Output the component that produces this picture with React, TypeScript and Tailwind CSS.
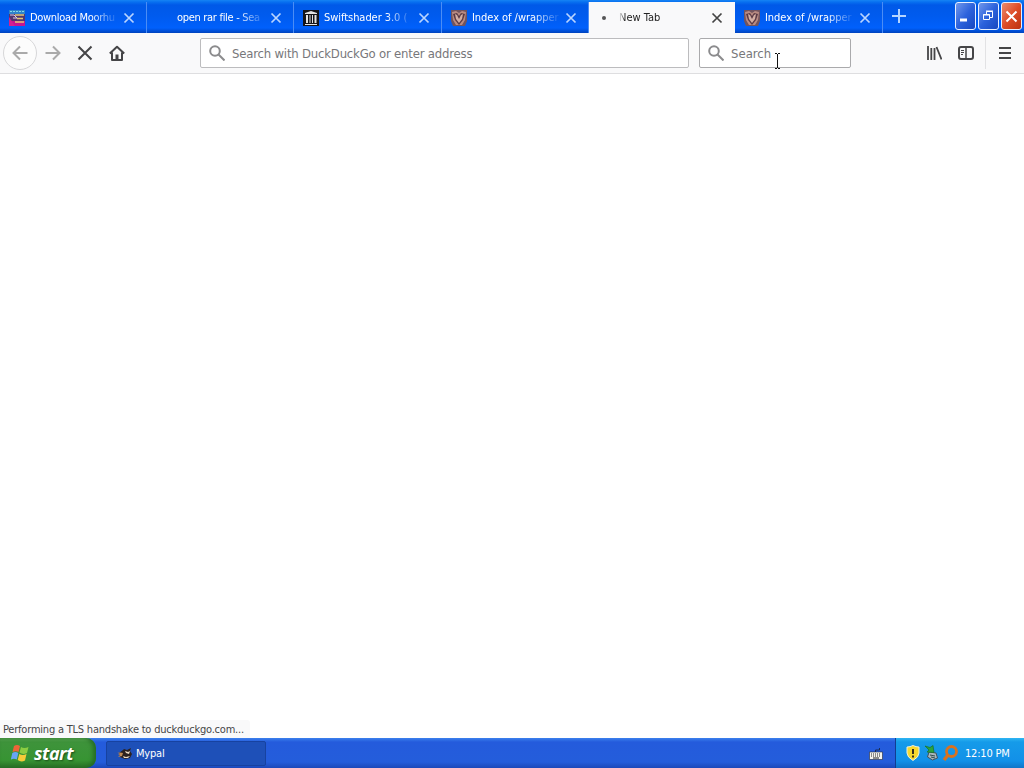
import type { ReactNode } from "react";

type Site = "moor" | "none" | "archive" | "owl" | "loading";

const TABS: { title: string; site: Site; width: string; text: string; active?: boolean }[] = [
  { title: "Download Moorhu",   site: "moor",    width: "w-[147px]", text: "tracking-[-0.32px]" },
  { title: "open rar file - Sea", site: "none",    width: "w-[147px]", text: "tracking-[-0.3px]" },
  { title: "Swiftshader 3.0 (", site: "archive", width: "w-[148px]", text: "tracking-[-0.05px]" },
  { title: "Index of /wrapper", site: "owl",     width: "w-[147px]", text: "tracking-[-0.05px]" },
  { title: "New Tab",           site: "loading", width: "w-[146px]", text: "tracking-[0px]", active: true },
  { title: "Index of /wrapper", site: "owl",     width: "w-[148px]", text: "tracking-[-0.05px]" },
];

function Favicon({ site }: { site: Site }) {
  if (site === "none") return <span className="w-4 shrink-0" />;
  if (site === "loading")
    return (
      <span className="flex w-4 shrink-0 justify-center pr-1">
        <span className="size-1 rounded-full bg-[#555]" />
      </span>
    );
  if (site === "moor")
    return (
      <svg className="size-4 shrink-0" viewBox="0 0 16 16">
        <path fill="#2f83c9" d="M0 0h16v5H0z" />
        <path fill="#54366d" d="M0 4h16v7H0z" />
        <path fill="#c51492" d="M0 11h16v5H0z" />
        <path fill="#d51f8f" d="M0 7l6 9H0z" />
        <path stroke="#85d9e8" d="M1 1.500h14" strokeDasharray="2 1" />
        <path stroke="#e1c875" strokeWidth="1.500" d="M6 5h9M8 8.500h6M6 12h9" />
        <path stroke="#d9cbe8" d="M1 5h4l3 3H4" fill="none" />
      </svg>
    );
  if (site === "archive")
    return (
      <svg className="size-4 shrink-0" viewBox="0 0 16 16">
        <path fill="#151519" d="M0 0h16v16H0z" />
        <path fill="#e4e4e4" d="M8 1l6 2v1H2V3zM3 5h2v8H3zm3.500 0h1v8h-1zM9 5h1v8H9zm2.500 0h2v8h-2zM2 14h12v1H2z" />
      </svg>
    );
  return (
    <svg className="size-4 shrink-0" viewBox="0 0 16 16">
      <path fill="#71545e" d="M0 0h16v11l-2 5H2l-2-5z" />
      <path fill="#b98b82" d="M1 2l4-1 3 2 3-2 4 1-1 8-3 5H5l-3-5z" />
      <path fill="#5b3a44" d="M2 4l4-1 2 3 2-3 4 1-2 6-4 5-4-5z" />
      <path fill="#d3aea3" d="M4 4l2 1 2 4 2-4 2-1-1 5-3 4-3-4z" />
    </svg>
  );
}

function CloseIcon({ className }: { className: string }) {
  return (
    <svg className={className} viewBox="0 0 12 12" fill="none" stroke="currentColor" strokeWidth="1.700">
      <path d="M1.500 1.500l9 9M10.500 1.500l-9 9" />
    </svg>
  );
}

function Tab({ title, site, width, text, active }: (typeof TABS)[number]) {
  return (
    <div
      className={`${width} flex shrink-0 items-center border-r pl-[9px] pr-[11px] ${
        active ? "border-[#f9f9fa] bg-[#f9f9fa] pr-[10px] text-[#222]" : "border-[#4b8df5] text-white"
      }`}
    >
      <Favicon site={site} />
      <span
        className={`ml-[5px] min-w-0 flex-1 overflow-hidden whitespace-nowrap text-[11px] leading-4 ${text} ${
          active
            ? "[mask-image:linear-gradient(to_right,transparent,#000_6px)]"
            : "[mask-image:linear-gradient(to_right,#000_68%,transparent)]"
        }`}
      >
        {title}
      </span>
      <CloseIcon className={`ml-1 size-3 shrink-0 ${active ? "text-[#444]" : "text-[#b9d5ff]"}`} />
    </div>
  );
}

function CaptionButton({ close, children }: { close?: boolean; children: ReactNode }) {
  return (
    <button
      className={`flex h-7 w-[21px] items-center justify-center rounded-[3px] border border-[#e8f0ff] ${
        close
          ? "bg-linear-to-br from-[#e98a6c] via-[#de4c26] to-[#bb3210]"
          : "bg-linear-to-br from-[#7096ea] via-[#2c62dc] to-[#1747c0]"
      }`}
    >
      <svg className="size-[19px] shrink-0" viewBox="0 0 19 19" fill="none" stroke="#fff">
        {children}
      </svg>
    </button>
  );
}

function SearchIcon() {
  return (
    <svg className="size-4 shrink-0" viewBox="0 0 16 16" fill="none" stroke="#8b8b8d" strokeWidth="2">
      <circle cx="6" cy="6" r="4.800" />
      <path d="M9.500 9.500l6 6" />
    </svg>
  );
}

export default function App() {
  return (
    <div className="flex h-[768px] w-[1024px] flex-col overflow-hidden bg-white font-['DejaVu_Sans_Condensed','DejaVu_Sans',sans-serif]">
      {/* Tab strip */}
      <header className="flex h-[33px] shrink-0 bg-[linear-gradient(to_bottom,#1684f4_0,#0870f0_2px,#0059e8_5px,#005bee_16px,#0060fc_28px,#0043bd_33px)] pt-0.5">
        {TABS.map((tab, i) => <Tab key={i} {...tab} />)}
        <svg className="ml-[9px] mt-[7px] size-[14px]" viewBox="0 0 14 14" stroke="#b5d5ff" strokeWidth="2">
          <path d="M7 0v14M0 7h14" />
        </svg>
        <div className="ml-auto flex gap-[2px] pr-0.5">
          <CaptionButton><path strokeWidth="3" d="M4 13h7" /></CaptionButton>
          <CaptionButton>
            <path d="M7.500 7V4.500h6v6H11M4.500 7.500h6v5h-6zM4 8h7M7 4h7" />
          </CaptionButton>
          <CaptionButton close><path strokeWidth="2" d="M4.500 4.500l10 10M14.500 4.500l-10 10" /></CaptionButton>
        </div>
      </header>

      {/* Navigation bar */}
      <nav className="relative flex h-[41px] shrink-0 items-center border-b border-[#dedee0] bg-[#f9f9fa] text-[#454547]">
        <div className="ml-[3px] flex size-[34px] items-center justify-center rounded-full border border-[#d7d7d9] bg-[#fcfcfc]">
          <svg className="size-4" viewBox="0 0 16 16" fill="none" stroke="#aaa" strokeWidth="2">
            <path d="M15.500 8H1.500M8 1.500L1.500 8 8 14.500" />
          </svg>
        </div>
        <svg className="ml-2 size-4" viewBox="0 0 16 16" fill="none" stroke="#aaa" strokeWidth="2">
          <path d="M.5 8h14M8 1.500L14.500 8 8 14.500" />
        </svg>
        <svg className="ml-4 size-4" viewBox="0 0 16 16" fill="none" stroke="currentColor" strokeWidth="2">
          <path d="M1.500 1.500l13 13M14.500 1.500l-13 13" />
        </svg>
        <svg className="ml-4 size-4" viewBox="0 0 16 16" fill="none" stroke="currentColor" strokeWidth="2">
          <path d="M.8 8.500L8 1.800l7.200 6.700M3 7.500V15h10V7.500" strokeLinejoin="round" />
          <path d="M8 15V9.500" strokeWidth="3" />
        </svg>
        <div className="ml-[75px] flex h-[30px] w-[489px] items-center rounded-[2px] border border-[#bcbcbe] bg-white pl-2">
          <SearchIcon />
          <span className="ml-[7px] whitespace-nowrap pt-px text-[13px] tracking-[-0.2px] text-[#77777a]">
            Search with DuckDuckGo or enter address
          </span>
        </div>
        <div className="ml-2.5 flex h-[30px] w-[152px] items-center rounded-[2px] border border-[#aaaaac] bg-white pl-2">
          <SearchIcon />
          <span className="ml-[7px] pt-px text-[13px] text-[#77777a]">Search</span>
        </div>
        <svg className="absolute left-[774px] top-5 h-4 w-2" viewBox="0 0 8 16" stroke="#111" fill="none">
          <path d="M1 .5h2M4 .5h2M3.500 1v14M1 15.500h2M4 15.500h2" />
        </svg>
        <svg className="ml-[75px] size-4" viewBox="0 0 16 16" fill="none" stroke="currentColor" strokeWidth="1.800">
          <path d="M2 1v14M5.300 3v12M8.500 3v12M10.500 2l5 12.500" />
        </svg>
        <svg className="ml-4 size-4" viewBox="0 0 16 16" fill="none" stroke="currentColor">
          <rect x="1" y="2" width="14" height="12" rx="2" strokeWidth="2" />
          <path d="M8 2v12" strokeWidth="1.500" />
          <path d="M3 5.500h3M3 7.500h3M3 9.500h2" />
        </svg>
        <div className="ml-[11px] h-8 w-px bg-[#e2e2e4]" />
        <svg className="ml-[13px] h-3 w-3" viewBox="0 0 12 12" stroke="currentColor" strokeWidth="2">
          <path d="M0 1h12M0 6h12M0 11h12" />
        </svg>
      </nav>

      {/* Page */}
      <main className="flex flex-1 items-end bg-white">
        <div className="flex h-[18px] w-[250px] items-center rounded-tr-[3px] bg-[#f9f9fa] pl-[3px] pt-0.5 text-[11px] text-[#454547]">
          <span className="whitespace-nowrap tracking-[-0.21px]">Performing a TLS handshake to duckduckgo.com...</span>
        </div>
      </main>

      {/* Taskbar */}
      <footer className="flex h-[30px] shrink-0 bg-[linear-gradient(to_bottom,#3b80ed_0,#245bdc_4px,#245ddb_24px,#1c48b9_30px)] text-white">
        <button className="flex w-24 items-center rounded-r-[10px] bg-[linear-gradient(to_bottom,#5eac56_0,#3e933b_4px,#379433_22px,#286f26_30px)] pl-[11px] shadow-[inset_-3px_0_4px_#256c25]">
          <svg className="size-[18px]" viewBox="0 0 18 18">
            <path fill="#ef6438" d="M3 2q3-2 6 0L7.500 8Q5 6.500 1.500 8z" />
            <path fill="#8bcc42" d="M10 3q3 2 7.500 0L16 9q-4 2-7.500-.5z" />
            <path fill="#68a5f4" d="M1.300 9q3-2 6 0l-1.500 6.500q-3-1.500-6 0z" />
            <path fill="#f6cb39" d="M8.300 10q3.500 2 7.200 0L14 16.500q-4 2-7.300-.5z" />
          </svg>
          <span className="ml-[5px] font-['Open_Sans',sans-serif] text-[18px] font-bold italic leading-none tracking-[-0.5px] [text-shadow:1px_1px_2px_#194c18]">start</span>
        </button>
        <div className="ml-2.5 mt-[3px] flex h-[25px] w-40 items-center rounded-[2px] border border-[#1742a0] bg-[#1e50b8] pl-2.5 text-[11px]">
          <svg className="size-4" viewBox="0 0 16 16">
            <path fill="#2c211f" d="M2 7l4-3 1-1 3 1 4-2-1 3 2 3-2 4-5 1-5-2z" />
            <path fill="#c08a55" d="M0 6l3 1-2 1 2 1-2 2 4-1 1-3z" />
            <path fill="#eddcc2" d="M8 5l3 1 2-1-1 3-3-1zM6 10l3 1 4-1-2 2H7z" />
          </svg>
          <span className="ml-[3px] pt-0.5 tracking-[-0.2px]">Mypal</span>
        </div>
        <svg className="ml-auto mt-2.5 h-3 w-[14px]" viewBox="0 0 14 12">
          <path fill="none" stroke="#182b56" d="M6.500 4V2h4V0" />
          <path fill="#f3f3ed" stroke="#20283c" strokeWidth=".6" d="M.5 4h13v7.500H.5z" />
          <path stroke="#222" strokeDasharray="1 1" d="M2 6h10M2 8h10" />
          <path stroke="#222" d="M4 10h6" />
        </svg>
        <div className="ml-3 flex w-[129px] items-center border-l border-[#123d91] bg-[linear-gradient(to_bottom,#2fb5f3_0,#159be9_4px,#1290e8_23px,#1175c8_30px)] pl-2.5 text-[11px]">
          <svg className="h-4 w-[14px]" viewBox="0 0 14 16">
            <path fill="#f6d82e" stroke="#edf0dc" d="M1 2q3 0 6-1.500Q10 2 13 2v6q0 4-6 7.500Q1 12 1 8z" />
            <path stroke="#35301c" strokeWidth="2" d="M7 4v5M7 10.500v2" />
          </svg>
          <svg className="ml-1 size-4" viewBox="0 0 16 16">
            <path fill="#a9b8bc" stroke="#42515b" d="M5 7l7 1 1.500 5-5 2-5-3z" />
            <path stroke="#354b4a" d="M6 10l5 1M7 12l4 1" />
            <path fill="#2ca43c" stroke="#18712a" strokeWidth=".7" d="M1 1l5 1.500L9 .5l1 7-7-.5 2-2z" />
          </svg>
          <svg className="ml-0.5 size-[17px] shrink-0" viewBox="0 0 17 17" fill="none" stroke="#d8721f" strokeWidth="2.800">
            <circle cx="9.500" cy="6.500" r="5" />
            <path strokeWidth="3.500" d="M6 10l-4 5" />
          </svg>
          <span className="ml-1.5 whitespace-nowrap pt-0.5 tracking-[-0.2px]">12:10 PM</span>
        </div>
      </footer>
    </div>
  );
}
